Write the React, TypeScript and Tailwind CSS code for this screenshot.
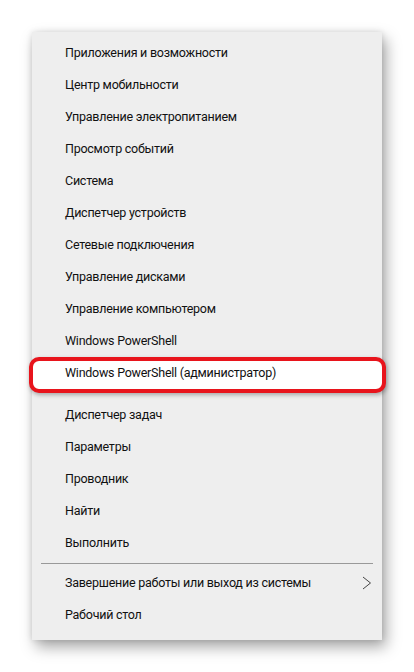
import React from "react";

const groupA = [
  "Приложения и возможности",
  "Центр мобильности",
  "Управление электропитанием",
  "Просмотр событий",
  "Система",
  "Диспетчер устройств",
  "Сетевые подключения",
  "Управление дисками",
  "Управление компьютером",
  "Windows PowerShell",
];
const groupB = ["Диспетчер задач", "Параметры", "Проводник", "Найти", "Выполнить"];

function Row({ label }: { label: string }) {
  return (
    <div className="h-[32px] flex items-center pl-[33px] text-[12.5px] tracking-[-0.25px] text-[#111]">{label}</div>
  );
}

export default function App() {
  return (
    <div
      className="w-[414px] h-[672px] bg-white pt-[32px] pl-[32px]"
      style={{ fontFamily: 'Roboto, "Noto Sans", sans-serif' }}
    >
      <div className="w-[350px] bg-[#eeeeee] pt-[5px] pb-[9px] shadow-[4px_7px_14px_rgba(0,0,0,0.35),0_0_6px_rgba(0,0,0,0.12)]">
        {groupA.map((l) => (
          <Row key={l} label={l} />
        ))}
        <div className="relative h-[32px] flex items-center pl-[33px] text-[12.5px] tracking-[-0.25px] text-[#111]">
          <div className="absolute left-[-3px] right-[-4px] top-0 h-[36px] rounded-[10px] border-[4px] border-[#e8141c] bg-white shadow-[1px_2px_4px_rgba(0,0,0,0.3)]" />
          <span className="relative">Windows PowerShell (администратор)</span>
        </div>
        <div className="h-[10px]" />
        {groupB.map((l) => (
          <Row key={l} label={l} />
        ))}
        <div className="h-[8px] flex items-center px-[9px]">
          <div className="h-px w-full bg-[#999]" />
        </div>
        <div className="h-[32px] flex items-center pl-[33px] pr-[10px] text-[12.5px] tracking-[-0.25px] text-[#111]">
          <span className="flex-1">Завершение работы или выход из системы</span>
          <svg width="10" height="14" viewBox="0 0 10 14" fill="none">
            <path d="M1 1 L8.5 7 L1 13" stroke="#444" strokeWidth="1" />
          </svg>
        </div>
        <Row label="Рабочий стол" />
      </div>
    </div>
  );
}
